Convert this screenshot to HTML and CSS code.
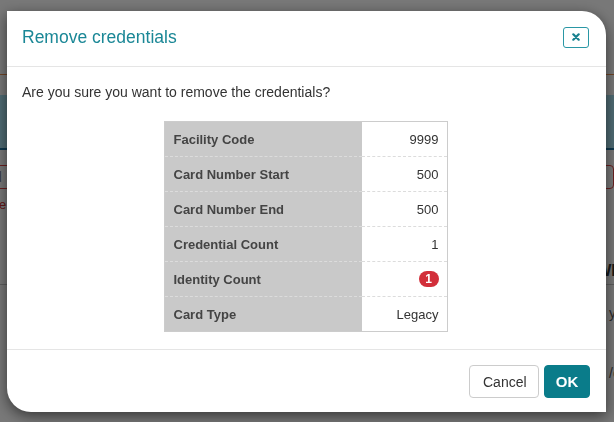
FILE: index.html
```html
<!DOCTYPE html>
<html lang="en">
<head>
  <meta charset="UTF-8" />
  <meta name="viewport" content="width=device-width, initial-scale=1" />
  <title>Remove credentials</title>
  <link rel="stylesheet" href="styles.css">
</head>
<body>
  <!-- page behind the dialog -->
  <div class="page">
    <div class="top-line"></div>
    <div class="band"></div>
    <div class="field-row">
      <div class="field-left">d</div>
      <div class="field-right"></div>
    </div>
    <div class="error-text">ie</div>
    <div class="section-title">WP</div>
    <div class="page-line"></div>
    <div class="page-text">y</div>
    <div class="page-text low">/c</div>
  </div>
  <div class="backdrop"></div>

  <div class="modal">
    <div class="modal-header">
      <h4 class="modal-title">Remove credentials</h4>
      <button class="btn-close" title="Close">
        <svg width="8" height="8" viewBox="0 0 8 8"><path d="M1.3 1.3 L6.7 6.7 M6.7 1.3 L1.3 6.7" stroke="#17818f" stroke-width="2.2" stroke-linecap="round"/></svg>
      </button>
    </div>
    <div class="modal-body">
      <p class="question">Are you sure you want to remove the credentials?</p>
      <table class="summary">
        <tr><th>Facility Code</th><td>9999</td></tr>
        <tr><th>Card Number Start</th><td>500</td></tr>
        <tr><th>Card Number End</th><td>500</td></tr>
        <tr><th>Credential Count</th><td>1</td></tr>
        <tr><th>Identity Count</th><td><span class="badge">1</span></td></tr>
        <tr><th>Card Type</th><td>Legacy</td></tr>
      </table>
    </div>
    <div class="modal-footer">
      <button class="btn btn-cancel">Cancel</button>
      <button class="btn btn-ok">OK</button>
    </div>
  </div>
</body>
</html>
```

FILE: styles.css
```css
body { margin: 0; font-family: 'Liberation Sans', Arial, sans-serif; background: #f0f0f0; width: 614px; height: 422px; overflow: hidden; }

/* background page */
.page { padding-top: 74px; }
.top-line { height: 1px; background: #e08a4c; }
.band { height: 53px; margin-top: 20px; background: #9fd6e6; border-bottom: 2px solid #1d6f9a; }
.field-row { display: flex; justify-content: space-between; margin-top: 15px; height: 24px; }
.field-left { width: 40px; border-top: 1px solid #d64040; border-bottom: 1px solid #d64040; color: #777; font-size: 14px; line-height: 22px; text-indent: -6px; }
.field-right { width: 40px; border: 1px solid #d64040; border-radius: 4px; }
.error-text { color: #c83030; font-size: 13px; margin-top: 8px; text-indent: -4px; }
.section-title { text-align: right; font-weight: bold; font-size: 16px; color: #333; margin-top: 50px; margin-right: -8px; }
.page-line { height: 1px; background: #bbb; margin-top: 4px; }
.page-text { text-align: right; font-size: 14px; color: #555; margin-top: 20px; margin-right: -2px; }
.page-text.low { margin-top: 44px; margin-right: -6px; }

.backdrop { position: fixed; inset: 0; background: rgba(0,0,0,0.5); }

/* dialog */
.modal { position: fixed; left: 7px; top: 11px; width: 599px; height: 401px; background: #fff; border-radius: 0 24px 0 24px; box-shadow: 0 4px 14px rgba(0,0,0,0.55); display: flex; flex-direction: column; }
.modal-header { height: 55px; border-bottom: 1px solid #e5e5e5; display: flex; align-items: center; justify-content: space-between; padding: 0 17px 0 15px; }
.modal-title { margin: 0; font-size: 17.5px; font-weight: normal; color: #1a8796; position: relative; top: -1px; }
.btn-close { width: 26px; height: 21px; border: 1px solid #2a97a5; border-radius: 3px; background: #fff; padding: 0; display: flex; align-items: center; justify-content: center; margin-top: -3px; }

.modal-body { flex: 1; padding: 15px 15px 0; }
.question { margin: 0; font-size: 14px; line-height: 20px; color: #333; }
.summary { margin: 19px auto 0; border-collapse: collapse; width: 284px; font-size: 13px; border: 1px solid #ccc; position: relative; left: -1px; }
.summary tr { height: 35px; }
.summary tr + tr th, .summary tr + tr td { border-top: 1px dashed #dcdcdc; }
.summary th { width: 179px; background: #c9c9c9; color: #444; text-align: left; padding: 0 9px; font-weight: bold; }
.summary td { text-align: right; padding: 0 8px; color: #333; }
.badge { display: inline-block; width: 20px; height: 16px; line-height: 16px; border-radius: 8px; background: #d22f3a; color: #fff; font-weight: bold; font-size: 12px; text-align: center; vertical-align: middle; }

.modal-footer { height: 63px; border-top: 1px solid #e5e5e5; display: flex; justify-content: flex-end; align-items: flex-start; gap: 5px; padding: 15px 16px 0; box-sizing: border-box; }
.btn { height: 33px; border-radius: 4px; font-family: 'Liberation Sans', Arial, sans-serif; font-size: 14px; padding: 0 13px; cursor: pointer; }
.btn-cancel { width: 70px; background: #fff; border: 1px solid #ccc; color: #333; }
.btn-ok { width: 46px; background: #0a7c8a; border: 1px solid #0a7c8a; color: #fff; font-weight: bold; font-size: 15px; padding: 0; }
```
